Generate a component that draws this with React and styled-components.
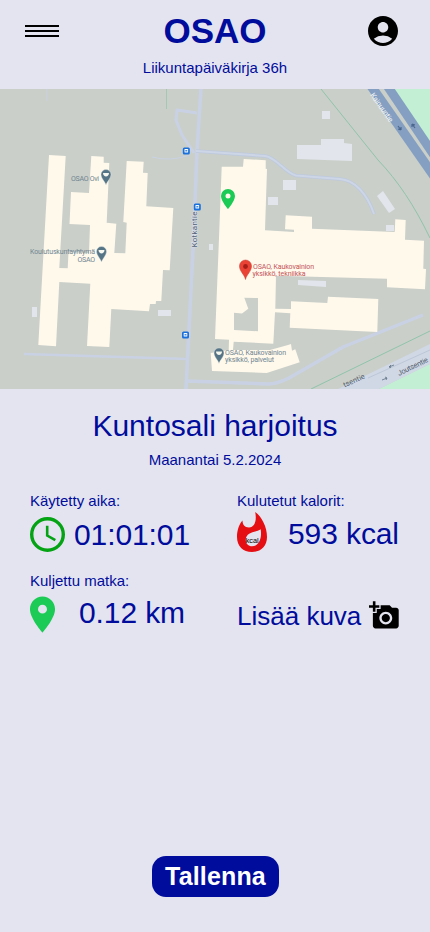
import React from "react";
import styled, { createGlobalStyle } from "styled-components";
import { MdAccountCircle, MdLocationOn, MdAddAPhoto } from "react-icons/md";

const GlobalStyle = createGlobalStyle`
  *, *::before, *::after { box-sizing: border-box; }
  body { margin: 0; background: #e4e4f0; }
`;

const Screen = styled.div`
  display: flex;
  flex-direction: column;
  width: 430px;
  height: 932px;
  overflow: hidden;
  background: #e4e4f0;
  color: #000c9b;
  font-family: "Liberation Sans", Arial, sans-serif;
`;

const Header = styled.header`
  display: grid;
  grid-template-columns: 34px 1fr 34px;
  align-items: start;
  height: 89px;
  padding: 11px 25px 0;
`;

const MenuButton = styled.button`
  display: flex;
  flex-direction: column;
  gap: 3px;
  margin: 14px 0 0;
  padding: 0;
  border: 0;
  background: none;
`;

const MenuLine = styled.span`
  width: 34px;
  height: 2px;
  background: #000;
`;

const Brand = styled.div`
  display: flex;
  flex-direction: column;
  align-items: center;
`;

const Logo = styled.h1`
  margin: 0;
  font-size: 35px;
  line-height: 40px;
  font-weight: 700;
`;

const Tagline = styled.p`
  margin: 8px 0 0;
  font-size: 15px;
  line-height: 18px;
  white-space: nowrap;
`;

const ProfileButton = styled.button`
  display: flex;
  margin: 2px 0 0 -6px;
  padding: 0;
  border: 0;
  background: none;
  color: #000;
`;

const MapFrame = styled.div`
  height: 300px;
  flex: none;
  svg { display: block; }
`;

const Summary = styled.section`
  display: flex;
  flex-direction: column;
  align-items: center;
  height: 104px;
  padding-top: 19px;
`;

const Title = styled.h2`
  margin: 0;
  font-size: 30px;
  line-height: 36px;
  font-weight: 400;
`;

const DateText = styled.p`
  margin: 7px 0 0;
  font-size: 15px;
  line-height: 18px;
`;

const Stats = styled.section`
  display: grid;
  grid-template-columns: 207px 1fr;
  grid-template-rows: 80px 80px;
  padding-left: 30px;
`;

const Stat = styled.div`
  display: flex;
  flex-direction: column;
`;

const Label = styled.span`
  font-size: 15px;
  line-height: 16px;
`;

const Reading = styled.div`
  display: flex;
  align-items: center;
  height: ${(p) => p.$h}px;
`;

const Value = styled.span`
  margin-left: ${(p) => p.$gap}px;
  font-size: 30px;
  line-height: 34px;
  letter-spacing: -0.1px;
  white-space: nowrap;
`;

const IconBox = styled.span`
  display: flex;
  align-items: center;
  justify-content: center;
  flex: none;
  width: ${(p) => p.$w}px;
  padding-top: ${(p) => p.$drop || 0}px;
  padding-bottom: ${(p) => p.$lift || 0}px;
  svg { flex: none; overflow: visible; }
`;

const AddPhoto = styled.button`
  display: flex;
  align-items: center;
  gap: 8px;
  margin: 23px 0 0;
  height: 40px;
  padding: 0;
  border: 0;
  background: none;
  color: inherit;
  font: 26px/30px "Liberation Sans", Arial, sans-serif;
  svg { color: #000; margin-bottom: 2px; }
`;

const SaveButton = styled.button`
  align-self: center;
  width: 127px;
  height: 41px;
  margin: auto 0 35px;
  padding: 0 0 0 1px;
  border: 0;
  border-radius: 14px;
  background: #000c9b;
  color: #fff;
  font: 700 25px/41px "Liberation Sans", Arial, sans-serif;
  letter-spacing: 0.15px;
`;

const MapText = styled.text`
  font-family: Roboto, sans-serif;
  font-size: ${(p) => p.$size || 7}px;
  fill: ${(p) => p.$color || "#708592"};
  stroke: ${(p) => p.$halo || "none"};
  stroke-width: 1px;
  paint-order: stroke;
`;

const KcalText = styled.text`
  font: 7.3px "Liberation Sans", Arial, sans-serif;
  fill: #000;
`;

function PlacePin({ x, y }) {
  return (
    <g transform={`translate(${x} ${y})`}>
      <path d="M0 0C-.8-3-5-6.8-5-10.500A5 5 0 0 1 5-10.500C5-6.8.8-3 0 0Z" fill="#557486" stroke="#e7ebe8" strokeWidth=".4" />
      <path d="M-3-12H3C3-7.500-3-7.500-3-12Z" fill="#f6f7ef" />
    </g>
  );
}

function BusStop({ x, y }) {
  return (
    <g transform={`translate(${x} ${y})`}>
      <rect x="-3.5" y="-3.5" width="7" height="7" rx="1.5" fill="#1a70dc" />
      <rect x="-1.8" y="-2" width="3.6" height="3.6" rx=".6" fill="#fff" />
      <path d="M-1-.2H1" stroke="#1a70dc" strokeWidth="1.2" />
    </g>
  );
}

function CampusMap() {
  return (
    <svg width="430" height="300" viewBox="0 89 430 300">
      <rect y="89" width="430" height="300" fill="#cacfc9" />
      <path d="M392 89H430V146Z" fill="#c3f0d5" />
      <path d="M379 389L430 364V389Z" fill="#c3f0d5" />
      <g fill="none" stroke="#c9d2e4" strokeWidth="3" strokeLinejoin="round">
        <path d="M201 89L197 151L193.5 240L186 389" strokeWidth="3.6" />
        <path d="M197 113L177 110L176 120L182 135L194 153" />
        <path d="M152 157Q170 162 190 155" strokeWidth="1" />
        <path d="M196 151L265 156C276 157 285 173 296 175.500L340 179C354 180 367 193 374 214" stroke="#bdc9dd" strokeWidth="3.6" />
        <path d="M196 151L265 156C276 157 285 173 296 175.500L340 179C354 180 367 193 374 214" stroke="#cdd6e6" strokeWidth="2" />
        <path d="M24 354L187 359" strokeWidth="2.5" />
        <path d="M187 381L268 384Q277 384 289 378L343 347L423 315" strokeWidth="3.4" />
        <path d="M47 89V101" strokeWidth=".8" />
      </g>
      <path d="M166.5 89V109" stroke="#94c5a8" strokeWidth=".7" />
      <path d="M321 89L378 160C398 181 414 205 430 238M311 389L430 331" fill="none" stroke="#8fc4aa" strokeWidth="1" />
      <path d="M338 389L430 344V364L379 389Z" fill="#d0d8e6" />
      <path d="M368 378L430 350" stroke="#b6c3d2" strokeWidth=".8" />
      <path d="M370.4 85L436 179" stroke="#849fc1" strokeWidth="9.3" />
      <path d="M386.7 85L436 158" stroke="#849fc1" strokeWidth="9" />
      <g fill="#e2e5eb">
        <path d="M297 145L321 145V139H344V143L352 144V161L297 159Z" />
        <path d="M322 111H330V119H322Z" />
        <path d="M283 180H296V190H283Z" />
        <path d="M268 197H278V205H268Z" />
        <path d="M377 196L383 191L395 209L389 213Z" />
        <path d="M386 225H394V231H386Z" />
        <path d="M298 280L326 281V287L298 285Z" />
        <path d="M32 307H37V317H32Z" />
        <path d="M158 310H171V316H158Z" />
        <path d="M209 244H213V250H209Z" />
      </g>
      <g fill="#fff9ec" fillRule="evenodd">
        <path d="M49 155L65.7 156L59.3 268L67.7 268.3L68.5 252L89 253L90 225L69.5 224L71 192L89 193L91.3 156L103.7 156.7V162.7L109.3 163L106.7 222.7L116.3 223.7L114.3 253L125.3 253.3L126.7 222.7L123.3 222L126.7 161L143.7 161.7L143 172.7L147.7 173L146.3 206.3L173.3 208L169.7 270.3L163 270L161.3 301H156L155.7 304H150L149 311.3L111.3 309L109.3 347L87 346L90.3 283.7L59.3 282L56 346.3L38.3 345Z" />
        <path d="M221.7 166.7H243L243.7 159L265.7 160.3V168.7L267 169L265 230.3L294 232V229.7L285 229.3L285.7 215.3L312 216.7V228.7L394.7 232L395.3 219.3L405.7 220L405 239.7L424 240.7L423.3 268.7L426 269L425 289.3L387 287.3V278.7L276 275.7L275.3 308.7L291 309V301.3L327.3 303L328 296.7L378.3 299L377.3 332L289.7 327.7L290.3 313.3L275 312.3L273.3 343.7L233.7 341.7L233 350L270 350L288 345L291 344L292 350.7L295.3 349.3L299.7 362.3L266.7 373L212 371L210.7 353L228.7 350L229 339.7L215 339L219 238ZM244.3 297.7L258 298V331.3L234 330V312.7L242 313.5L248.3 308.7Z" />
      </g>
      <BusStop x={186.3} y={151} />
      <BusStop x={197.3} y={207} />
      <BusStop x={185.5} y={335} />
      <MapText x="71" y="181" textLength="28">OSAO Ovi</MapText>
      <MapText x="30" y="254" textLength="65">Koulutuskuntayhtymä</MapText>
      <MapText x="77.5" y="261.5" textLength="17.5">OSAO</MapText>
      <MapText x="253" y="269" textLength="61" $color="#c5545a">OSAO, Kaukovainion</MapText>
      <MapText x="252.5" y="276" textLength="53" $color="#c5545a">yksikkö, tekniikka</MapText>
      <MapText x="225" y="355" textLength="61">OSAO, Kaukovainion</MapText>
      <MapText x="225" y="362" textLength="49">yksikkö, palvelut</MapText>
      <MapText transform="translate(196.5 247.5) rotate(-90)" textLength="36" $size={8} $color="#535f76" $halo="#dce2eb">Kotkantie</MapText>
      <MapText transform="translate(370 95) rotate(55)" textLength="34" $size={7.5} $color="#f5f7fa">Kainuuntie</MapText>
      <MapText transform="translate(399 376) rotate(-26)" textLength="33" $size={7.5} $color="#535f70">Joutsentie</MapText>
      <MapText transform="translate(344.5 387.5) rotate(-24)" textLength="23" $size={7.5} $color="#535f70">tsentie</MapText>
      <path d="M389 367L394 365M389 367l2-2M389 367l2 .5M382 380L387 378M387 378l-2-1M387 378l-1 2" fill="none" stroke="#68798c" strokeWidth=".9" />
      <path d="M398 126l3 4M401 130v-3M401 130l-3-1M412 124l3 4M412 124v3M412 124l3 1" stroke="#4b678d" strokeWidth="1.2" />
      <PlacePin x={106} y={185} />
      <PlacePin x={101.5} y={262} />
      <PlacePin x={219} y={363.5} />
      <g transform="translate(245.5 279.5)">
        <path d="M0 0C-1-5-6-8-6-13.500A6 6 0 0 1 6-13.500C6-8 1-5 0 0Z" fill="#ea4335" stroke="#c5362d" strokeWidth=".5" />
        <circle cy="-13" r="2.4" fill="#a51d18" />
      </g>
      <path d="M228 209C228 209 221 201 221 196A7 7 0 0 1 235 196C235 201 228 209 228 209ZM228 193.500A2.500 2.500 0 1 0 228 198.500A2.500 2.500 0 1 0 228 193.500" fill="#1ccb55" fillRule="evenodd" />
    </svg>
  );
}

function ClockIcon() {
  return (
    <svg width="35" height="35" viewBox="0 0 35 35" fill="none" stroke="#03a313">
      <circle cx="17.5" cy="17.5" r="15.8" strokeWidth="3.4" />
      <path d="M17.2 8.800V18.500L25.300 23.200" strokeWidth="2.6" />
    </svg>
  );
}

function FlameIcon() {
  return (
    <svg width="30" height="40" viewBox="0 0 30 40">
      <path d="M18.200 0C25 5 30 15 30 25C30 34 24 40 15 40S0 34 0 25C0 18.500 2 12.500 5.500 8.500C5.500 12.500 7.500 15.500 12 15.500C17.500 15 20 9 18.200 0ZM23.700 17.300C20 20.500 8.800 19.500 8.800 28C8.800 31.800 11.500 34.300 15 34.300C21.500 34.300 25.200 27 23.700 17.300Z" fill="#e50e12" fillRule="evenodd" />
      <KcalText x="8.7" y="31" textLength="12.8">kcal</KcalText>
    </svg>
  );
}

export default function App() {
  return (
    <>
      <GlobalStyle />
      <Screen>
        <Header>
          <MenuButton aria-label="Valikko">
            <MenuLine /><MenuLine /><MenuLine />
          </MenuButton>
          <Brand>
            <Logo>OSAO</Logo>
            <Tagline>Liikuntapäiväkirja 36h</Tagline>
          </Brand>
          <ProfileButton aria-label="Profiili"><MdAccountCircle size={36} /></ProfileButton>
        </Header>
        <MapFrame><CampusMap /></MapFrame>
        <Summary>
          <Title>Kuntosali harjoitus</Title>
          <DateText>Maanantai 5.2.2024</DateText>
        </Summary>
        <Stats>
          <Stat>
            <Label>Käytetty aika:</Label>
            <Reading $h={52}>
              <IconBox $w={35} $lift={1}><ClockIcon /></IconBox>
              <Value $gap={9}>01:01:01</Value>
            </Reading>
          </Stat>
          <Stat>
            <Label>Kulutetut kalorit:</Label>
            <Reading $h={50}>
              <IconBox $w={30} $lift={4}><FlameIcon /></IconBox>
              <Value $gap={21}>593 kcal</Value>
            </Reading>
          </Stat>
          <Stat>
            <Label>Kuljettu matka:</Label>
            <Reading $h={48}>
              <IconBox $w={25} $drop={3}><MdLocationOn size={43} color="#1ccb55" /></IconBox>
              <Value $gap={24}>0.12 km</Value>
            </Reading>
          </Stat>
          <Stat>
            <AddPhoto>Lisää kuva <MdAddAPhoto size={31} /></AddPhoto>
          </Stat>
        </Stats>
        <SaveButton>Tallenna</SaveButton>
      </Screen>
    </>
  );
}
